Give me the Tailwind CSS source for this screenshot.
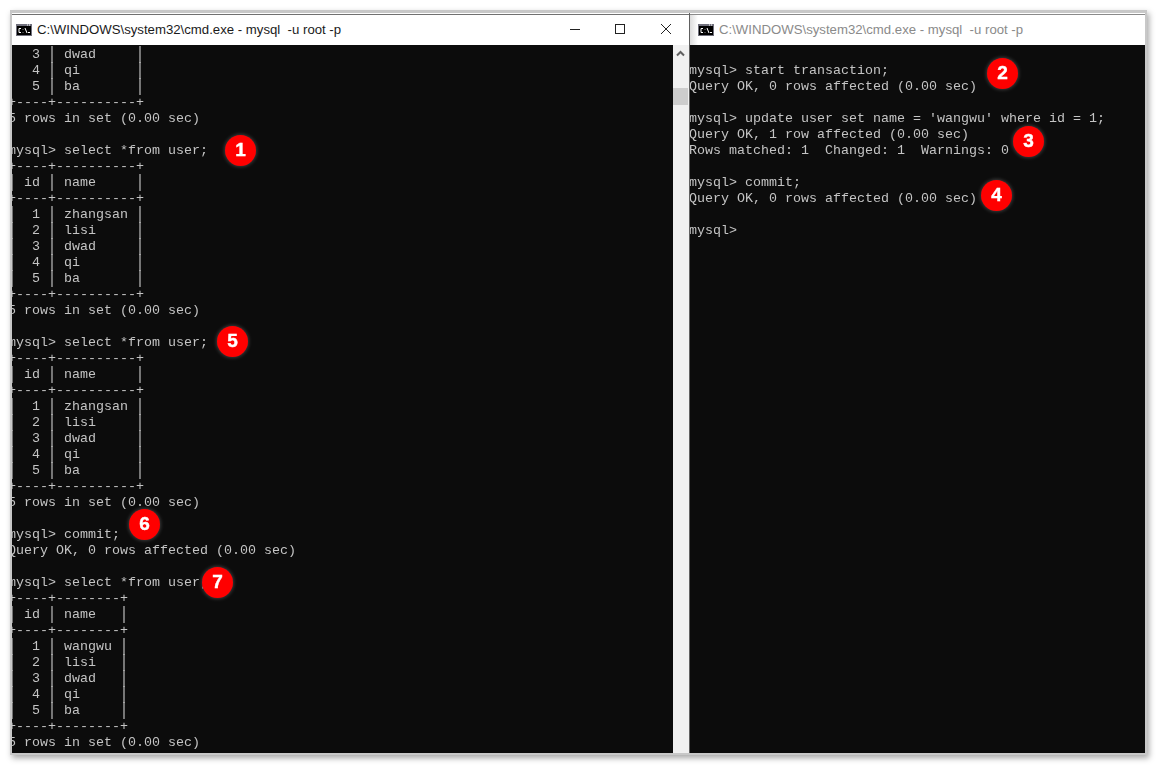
<!DOCTYPE html>
<html><head><meta charset="utf-8"><script src="https://cdn.jsdelivr.net/npm/@tailwindcss/browser@4"></script></head>
<body class="bg-white w-[1158px] h-[767px] overflow-hidden relative">
<div class="absolute left-[10px] top-[10px] w-[1137px] h-[745px] bg-[#c8c8c8] shadow-[2px_3px_6px_rgba(0,0,0,0.35)] flex pl-[2px] pt-[3px] pr-[2px] pb-[2px]">
 <div class="w-[678px] flex flex-col pt-[1px] bg-white border-r border-[#606060]">
  <div class="h-[31px] flex items-center bg-white shrink-0 border-t border-[#707070]">
   <svg class="ml-[4px] w-[16px] h-[12px]" viewBox="0 0 16 12"><rect width="16" height="12" fill="#70707c"/><path d="M11 1h1M13 1h1" stroke="#fff"/><rect x="1" y="2" width="14" height="9" fill="#000"/><path d="M5 4.5H3v4h2M7 5v.5M7 8v.5M9 4l2 5M12 8.5h2" stroke="#fff" fill="none"/></svg>
   <span class="ml-[5px] font-['Liberation_Sans'] text-[13.2px] text-[#1a1a1a] whitespace-pre">C:\WINDOWS\system32\cmd.exe - mysql  -u root -p</span>
   <div class="ml-auto flex items-center">
    <svg class="w-[45px] h-[30px]" viewBox="0 0 45 30"><path d="M16 14.5h10" stroke="#222"/></svg>
    <svg class="w-[45px] h-[30px]" viewBox="0 0 45 30"><rect x="16.5" y="9.5" width="9" height="9" fill="none" stroke="#222"/></svg>
    <svg class="w-[45px] h-[30px]" viewBox="0 0 45 30"><path d="M17 9l10 10M27 9l-10 10" stroke="#222"/></svg>
   </div>
  </div>
  <div class="flex-1 flex min-h-0">
   <div class="flex-1 bg-[#0c0c0c] overflow-hidden">
<pre class="font-['Liberation_Mono'] text-[13.33px] leading-[16px] text-[#c4c4c4] will-change-transform -ml-[4px] pt-[2px]">   3 <span class="inline-block scale-y-[1.35]">|</span> dwad     <span class="inline-block scale-y-[1.35]">|</span>
   4 <span class="inline-block scale-y-[1.35]">|</span> qi       <span class="inline-block scale-y-[1.35]">|</span>
   5 <span class="inline-block scale-y-[1.35]">|</span> ba       <span class="inline-block scale-y-[1.35]">|</span>
+----+----------+
5 rows in set (0.00 sec)

mysql> select *from user;
+----+----------+
<span class="inline-block scale-y-[1.35]">|</span> id <span class="inline-block scale-y-[1.35]">|</span> name     <span class="inline-block scale-y-[1.35]">|</span>
+----+----------+
<span class="inline-block scale-y-[1.35]">|</span>  1 <span class="inline-block scale-y-[1.35]">|</span> zhangsan <span class="inline-block scale-y-[1.35]">|</span>
<span class="inline-block scale-y-[1.35]">|</span>  2 <span class="inline-block scale-y-[1.35]">|</span> lisi     <span class="inline-block scale-y-[1.35]">|</span>
<span class="inline-block scale-y-[1.35]">|</span>  3 <span class="inline-block scale-y-[1.35]">|</span> dwad     <span class="inline-block scale-y-[1.35]">|</span>
<span class="inline-block scale-y-[1.35]">|</span>  4 <span class="inline-block scale-y-[1.35]">|</span> qi       <span class="inline-block scale-y-[1.35]">|</span>
<span class="inline-block scale-y-[1.35]">|</span>  5 <span class="inline-block scale-y-[1.35]">|</span> ba       <span class="inline-block scale-y-[1.35]">|</span>
+----+----------+
5 rows in set (0.00 sec)

mysql> select *from user;
+----+----------+
<span class="inline-block scale-y-[1.35]">|</span> id <span class="inline-block scale-y-[1.35]">|</span> name     <span class="inline-block scale-y-[1.35]">|</span>
+----+----------+
<span class="inline-block scale-y-[1.35]">|</span>  1 <span class="inline-block scale-y-[1.35]">|</span> zhangsan <span class="inline-block scale-y-[1.35]">|</span>
<span class="inline-block scale-y-[1.35]">|</span>  2 <span class="inline-block scale-y-[1.35]">|</span> lisi     <span class="inline-block scale-y-[1.35]">|</span>
<span class="inline-block scale-y-[1.35]">|</span>  3 <span class="inline-block scale-y-[1.35]">|</span> dwad     <span class="inline-block scale-y-[1.35]">|</span>
<span class="inline-block scale-y-[1.35]">|</span>  4 <span class="inline-block scale-y-[1.35]">|</span> qi       <span class="inline-block scale-y-[1.35]">|</span>
<span class="inline-block scale-y-[1.35]">|</span>  5 <span class="inline-block scale-y-[1.35]">|</span> ba       <span class="inline-block scale-y-[1.35]">|</span>
+----+----------+
5 rows in set (0.00 sec)

mysql> commit;
Query OK, 0 rows affected (0.00 sec)

mysql> select *from user;
+----+--------+
<span class="inline-block scale-y-[1.35]">|</span> id <span class="inline-block scale-y-[1.35]">|</span> name   <span class="inline-block scale-y-[1.35]">|</span>
+----+--------+
<span class="inline-block scale-y-[1.35]">|</span>  1 <span class="inline-block scale-y-[1.35]">|</span> wangwu <span class="inline-block scale-y-[1.35]">|</span>
<span class="inline-block scale-y-[1.35]">|</span>  2 <span class="inline-block scale-y-[1.35]">|</span> lisi   <span class="inline-block scale-y-[1.35]">|</span>
<span class="inline-block scale-y-[1.35]">|</span>  3 <span class="inline-block scale-y-[1.35]">|</span> dwad   <span class="inline-block scale-y-[1.35]">|</span>
<span class="inline-block scale-y-[1.35]">|</span>  4 <span class="inline-block scale-y-[1.35]">|</span> qi     <span class="inline-block scale-y-[1.35]">|</span>
<span class="inline-block scale-y-[1.35]">|</span>  5 <span class="inline-block scale-y-[1.35]">|</span> ba     <span class="inline-block scale-y-[1.35]">|</span>
+----+--------+
5 rows in set (0.00 sec)</pre>
   </div>
   <div class="w-[16px] bg-[#f0f0f0] shrink-0 flex flex-col items-start">
    <svg class="w-[15px] h-[16px] mt-[1px]" viewBox="0 0 15 16"><path d="M4 9.5l3.5-3.5 3.5 3.5" stroke="#606060" stroke-width="2" fill="none"/></svg>
    <div class="w-[15px] h-[17px] bg-[#cdcdcd] mt-[26px]"></div>
   </div>
  </div>
 </div>
 <div class="flex-1 flex flex-col bg-white pt-[1px]">
  <div class="h-[31px] flex items-center shrink-0 border-t border-[#8a8a8a] bg-[linear-gradient(90deg,#dcdcdc,#ffffff_8px)]">
   <svg class="ml-[8px] w-[16px] h-[12px]" viewBox="0 0 16 12"><rect width="16" height="12" fill="#70707c"/><path d="M11 1h1M13 1h1" stroke="#fff"/><rect x="1" y="2" width="14" height="9" fill="#000"/><path d="M5 4.5H3v4h2M7 5v.5M7 8v.5M9 4l2 5M12 8.5h2" stroke="#fff" fill="none"/></svg>
   <span class="ml-[5px] font-['Liberation_Sans'] text-[13.2px] text-[#8a8a8a] whitespace-pre">C:\WINDOWS\system32\cmd.exe - mysql  -u root -p</span>
  </div>
  <div class="flex-1 bg-[#0c0c0c] overflow-hidden">
<pre class="font-['Liberation_Mono'] text-[13.33px] leading-[16px] text-[#c4c4c4] will-change-transform pt-[2px] -ml-[1px]">

mysql> start transaction;
Query OK, 0 rows affected (0.00 sec)

mysql> update user set name = 'wangwu' where id = 1;
Query OK, 1 row affected (0.00 sec)
Rows matched: 1  Changed: 1  Warnings: 0

mysql> commit;
Query OK, 0 rows affected (0.00 sec)

mysql></pre>
  </div>
 </div>
</div>
<div class="absolute left-[225px] top-[135px] w-[31px] h-[31px] rounded-full bg-[#ff0000] text-white font-bold text-[19px] [-webkit-text-stroke:0.4px_white] flex items-center justify-center font-['Liberation_Sans'] shadow-[0_0_4px_rgba(255,255,255,0.3)]">1</div>
<div class="absolute left-[987px] top-[58px] w-[31px] h-[31px] rounded-full bg-[#ff0000] text-white font-bold text-[19px] [-webkit-text-stroke:0.4px_white] flex items-center justify-center font-['Liberation_Sans'] shadow-[0_0_4px_rgba(255,255,255,0.3)]">2</div>
<div class="absolute left-[1013px] top-[126px] w-[31px] h-[31px] rounded-full bg-[#ff0000] text-white font-bold text-[19px] [-webkit-text-stroke:0.4px_white] flex items-center justify-center font-['Liberation_Sans'] shadow-[0_0_4px_rgba(255,255,255,0.3)]">3</div>
<div class="absolute left-[981px] top-[180px] w-[31px] h-[31px] rounded-full bg-[#ff0000] text-white font-bold text-[19px] [-webkit-text-stroke:0.4px_white] flex items-center justify-center font-['Liberation_Sans'] shadow-[0_0_4px_rgba(255,255,255,0.3)]">4</div>
<div class="absolute left-[217px] top-[326px] w-[31px] h-[31px] rounded-full bg-[#ff0000] text-white font-bold text-[19px] [-webkit-text-stroke:0.4px_white] flex items-center justify-center font-['Liberation_Sans'] shadow-[0_0_4px_rgba(255,255,255,0.3)]">5</div>
<div class="absolute left-[129px] top-[509px] w-[31px] h-[31px] rounded-full bg-[#ff0000] text-white font-bold text-[19px] [-webkit-text-stroke:0.4px_white] flex items-center justify-center font-['Liberation_Sans'] shadow-[0_0_4px_rgba(255,255,255,0.3)]">6</div>
<div class="absolute left-[202px] top-[567px] w-[31px] h-[31px] rounded-full bg-[#ff0000] text-white font-bold text-[19px] [-webkit-text-stroke:0.4px_white] flex items-center justify-center font-['Liberation_Sans'] shadow-[0_0_4px_rgba(255,255,255,0.3)]">7</div>
</body></html>
